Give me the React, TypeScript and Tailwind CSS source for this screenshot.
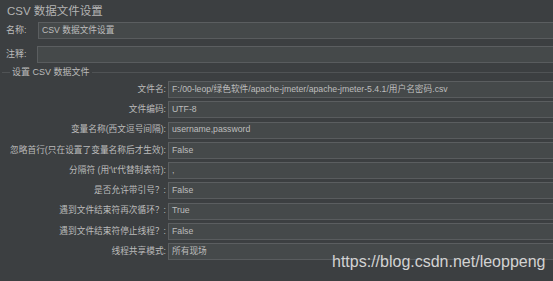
import React from 'react'

const rows: { label: string; value: string }[] = [
  { label: '文件名:', value: 'F:/00-leop/绿色软件/apache-jmeter/apache-jmeter-5.4.1/用户名密码.csv' },
  { label: '文件编码:', value: 'UTF-8' },
  { label: '变量名称(西文逗号间隔):', value: 'username,password' },
  { label: '忽略首行(只在设置了变量名称后才生效):', value: 'False' },
  { label: "分隔符 (用'\\t'代替制表符):", value: ',' },
  { label: '是否允许带引号？:', value: 'False' },
  { label: '遇到文件结束符再次循环？:', value: 'True' },
  { label: '遇到文件结束符停止线程？:', value: 'False' },
  { label: '线程共享模式:', value: '所有现场' },
]

const Field: React.FC<{ value?: string }> = ({ value }) => (
  <div className="flex-1 h-[17px] mr-[-4px] flex items-center bg-[#45494a] border border-[#5b5e60] border-b-[#595c5e] pl-[3px] text-[8.7px] text-[#bdbdbd] whitespace-nowrap overflow-hidden">
    {value}
  </div>
)

const App: React.FC = () => {
  return (
    <div
      className="relative w-[553px] h-[281px] overflow-hidden bg-[#3c3f41] text-[#bbbbbb]"
      style={{ fontFamily: '"Liberation Sans", "Noto Sans CJK SC", sans-serif' }}
    >
      <div className="pl-[7px] pt-[3px] h-[22px] text-[11.5px] leading-[16px] text-[#b4b4b4]">CSV 数据文件设置</div>

      <div className="flex items-center h-[17px]">
        <div className="w-[38px] pl-[6px] text-[9px]">名称:</div>
        <Field value="CSV 数据文件设置" />
      </div>

      <div className="flex items-center h-[17px] mt-[7px]">
        <div className="w-[37px] pl-[6px] text-[9px]">注释:</div>
        <Field />
      </div>

      <div className="flex items-center h-[18px] text-[9px]">
        <div className="w-[8px] ml-[2px] h-px bg-[#505355]" />
        <span className="px-[2px] leading-none">设置 CSV 数据文件</span>
        <div className="flex-1 h-px bg-[#505355]" />
      </div>

      <div className="flex flex-col gap-[3.25px]">
        {rows.map((r) => (
          <div key={r.label} className="flex items-center h-[17px]">
            <div className="w-[168px] pr-[2px] text-right text-[8.7px] whitespace-nowrap">{r.label}</div>
            <Field value={r.value} />
          </div>
        ))}
      </div>

      <div className="absolute left-[332px] top-[252px] text-[16px] leading-[20px] text-[#d2d2d2]">
        https://blog.csdn.net/leoppeng
      </div>
    </div>
  )
}

export default App
